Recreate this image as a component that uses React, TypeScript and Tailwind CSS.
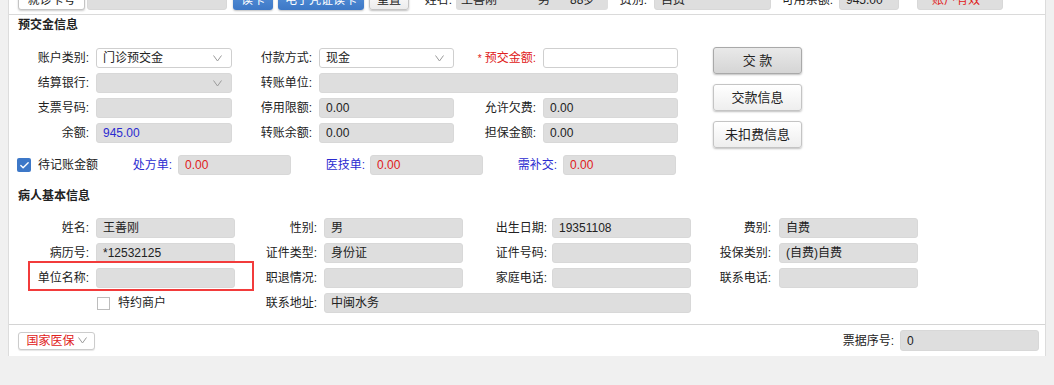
import type { ReactNode } from "react";
import { Check } from "lucide-react";

function Caret() {
  return (
    <svg width="9" height="7" viewBox="0 0 9 7" className="shrink-0">
      <polyline points="0.5,0.5 4.5,6 8.5,0.5" fill="none" stroke="#9a9a9a" strokeWidth="1" />
    </svg>
  );
}

type BoxProps = {
  className?: string;
  value?: string;
  white?: boolean;
  select?: boolean;
  valueClass?: string;
};

function Box({ className = "", value, white, select, valueClass = "text-[#222]" }: BoxProps) {
  return (
    <div
      className={`flex h-5 shrink-0 items-center rounded-[3px] border pl-[6px] pr-[9px] ${
        white ? "border-[#cfcfcf] bg-white" : "border-[#d8d8d8] bg-[#dedede]"
      } ${className}`}
    >
      <span className={`flex-1 truncate ${valueClass}`}>{value}</span>
      {select && <Caret />}
    </div>
  );
}

function Label({
  className = "",
  tone = "text-[#222]",
  children,
}: {
  className?: string;
  tone?: string;
  children: ReactNode;
}) {
  return (
    <div className={`shrink-0 whitespace-nowrap text-right ${tone} ${className}`}>{children}</div>
  );
}

function SideButton({ children, primary }: { children: ReactNode; primary?: boolean }) {
  return (
    <button
      className={`h-[27px] w-[89px] rounded-[3px] border text-[13px] text-[#222] shadow-[0_1px_2px_rgba(0,0,0,0.25)] ${
        primary
          ? "border-[#a9a9a9] bg-gradient-to-b from-[#e9e9e9] to-[#d5d5d5]"
          : "border-[#c4c4c4] bg-gradient-to-b from-white to-[#eeeeee]"
      }`}
    >
      {children}
    </button>
  );
}

function TopBar() {
  return (
    <div className="h-[15px] overflow-hidden border-b border-[#dadada]">
      <div className="-mt-[11px] flex h-[21px] items-center pl-[9px]">
        <button className="h-[21px] w-[67px] rounded-[3px] border border-[#c4c4c4] bg-white text-[#222] shadow-[0_1px_2px_rgba(0,0,0,0.2)]">
          就诊卡号
        </button>
        <Box className="ml-[2px] w-[140px]" />
        <button className="ml-[6px] h-[21px] w-[40px] rounded-[3px] bg-gradient-to-b from-[#5b95dc] to-[#3d78c6] text-white shadow-[0_1px_2px_rgba(0,0,0,0.25)]">
          读卡
        </button>
        <button className="ml-[5px] h-[21px] w-[86px] rounded-[3px] bg-gradient-to-b from-[#5b95dc] to-[#3d78c6] text-white shadow-[0_1px_2px_rgba(0,0,0,0.25)]">
          电子凭证读卡
        </button>
        <button className="ml-[5px] h-[21px] w-[40px] rounded-[3px] border border-[#c4c4c4] bg-gradient-to-b from-white to-[#ececec] text-[#222] shadow-[0_1px_2px_rgba(0,0,0,0.25)]">
          重置
        </button>
        <Label className="w-[47px] pr-[4px]">姓名:</Label>
        <div className="flex h-5 w-[152px] items-center rounded-[3px] bg-[#dedede] pl-[5px] text-[#222]">
          <span className="w-[77px]">王善刚</span>
          <span className="w-[32px]">男</span>
          <span>88岁</span>
        </div>
        <Label className="w-[46px] pr-[7px]">费别:</Label>
        <Box className="w-[117px]" value="自费" />
        <Label className="w-[68px] pr-[6px]">可用余额:</Label>
        <Box className="w-[60px]" value="945.00" />
        <Box className="ml-[18px] w-[86px] pl-[14px]" value="账户有效" valueClass="text-[#e02020]" />
      </div>
    </div>
  );
}

function Prepaid() {
  return (
    <div className="pl-[9px]">
      <div className="pt-[2px] font-bold leading-4 text-[#222]">预交金信息</div>
      <div className="mt-[15px] flex">
        <div className="flex flex-col gap-[5px]">
          <div className="flex items-center">
            <Label className="w-[78px] pr-[7px]">账户类别:</Label>
            <Box className="w-[136px]" white select value="门诊预交金" />
            <Label className="w-[87px] pr-[7px]">付款方式:</Label>
            <Box className="w-[135px]" white select value="现金" />
            <Label className="w-[89px] pr-[7px]" tone="text-[#e02020]">
              <span className="mr-[3px] text-[10px]">*</span>预交金额:
            </Label>
            <Box className="w-[135px]" white />
          </div>
          <div className="flex items-center">
            <Label className="w-[78px] pr-[7px]">结算银行:</Label>
            <Box className="w-[136px]" select />
            <Label className="w-[87px] pr-[7px]">转账单位:</Label>
            <Box className="w-[359px]" />
          </div>
          <div className="flex items-center">
            <Label className="w-[78px] pr-[7px]">支票号码:</Label>
            <Box className="w-[136px]" />
            <Label className="w-[87px] pr-[7px]">停用限额:</Label>
            <Box className="w-[135px]" value="0.00" />
            <Label className="w-[89px] pr-[7px]">允许欠费:</Label>
            <Box className="w-[135px]" value="0.00" />
          </div>
          <div className="flex items-center">
            <Label className="w-[78px] pr-[7px]">余额:</Label>
            <Box className="w-[136px]" value="945.00" valueClass="text-[#2b2bd0]" />
            <Label className="w-[87px] pr-[7px]">转账余额:</Label>
            <Box className="w-[135px]" value="0.00" />
            <Label className="w-[89px] pr-[7px]">担保金额:</Label>
            <Box className="w-[135px]" value="0.00" />
          </div>
        </div>
        <div className="-mt-[1px] ml-[35px] flex flex-col gap-[10px]">
          <SideButton primary>交 款</SideButton>
          <SideButton>交款信息</SideButton>
          <SideButton>未扣费信息</SideButton>
        </div>
      </div>
      <div className="mt-[7px] flex items-center">
        <div className="-ml-[1px] flex size-[14px] items-center justify-center rounded-[2px] bg-[#3d78c8]">
          <Check className="size-[11px] text-white" strokeWidth={3} />
        </div>
        <span className="ml-[7px] w-[62px] text-[#222]">待记账金额</span>
        <Label className="w-[78px] pr-[6px]" tone="text-[#2b2bd0]">处方单:</Label>
        <Box className="w-[113px]" value="0.00" valueClass="text-[#e02020]" />
        <Label className="w-[79px] pr-[5px]" tone="text-[#2b2bd0]">医技单:</Label>
        <Box className="w-[113px]" value="0.00" valueClass="text-[#e02020]" />
        <Label className="w-[80px] pr-[6px]" tone="text-[#2b2bd0]">需补交:</Label>
        <Box className="w-[113px]" value="0.00" valueClass="text-[#e02020]" />
      </div>
    </div>
  );
}

function Patient() {
  return (
    <div className="pl-[9px] pb-[11px]">
      <div className="mt-[13px] font-bold leading-4 text-[#222]">病人基本信息</div>
      <div className="mt-[14px] flex flex-col gap-[5px]">
        <div className="flex items-center">
          <Label className="w-[78px] pr-[7px]">姓名:</Label>
          <Box className="w-[139px]" value="王善刚" />
          <Label className="w-[89px] pr-[7px]">性别:</Label>
          <Box className="w-[139px]" value="男" />
          <Label className="w-[89px] pr-[5px]">出生日期:</Label>
          <Box className="w-[139px]" value="19351108" />
          <Label className="w-[88px] pr-[8px]">费别:</Label>
          <Box className="w-[139px]" value="自费" />
        </div>
        <div className="flex items-center">
          <Label className="w-[78px] pr-[7px]">病历号:</Label>
          <Box className="w-[139px]" value="*12532125" />
          <Label className="w-[89px] pr-[7px]">证件类型:</Label>
          <Box className="w-[139px]" value="身份证" />
          <Label className="w-[89px] pr-[5px]">证件号码:</Label>
          <Box className="w-[139px]" />
          <Label className="w-[88px] pr-[8px]">投保类别:</Label>
          <Box className="w-[139px]" value="(自费)自费" />
        </div>
        <div className="flex items-center">
          <Label className="w-[78px] pr-[7px]">单位名称:</Label>
          <Box className="w-[139px]" />
          <Label className="w-[89px] pr-[7px]">职退情况:</Label>
          <Box className="w-[139px]" />
          <Label className="w-[89px] pr-[5px]">家庭电话:</Label>
          <Box className="w-[139px]" />
          <Label className="w-[88px] pr-[8px]">联系电话:</Label>
          <Box className="w-[139px]" />
        </div>
        <div className="flex items-center">
          <div className="flex w-[217px] items-center pl-[79px]">
            <div className="size-[13px] border border-[#bdbdbd] bg-white" />
            <span className="ml-[8px] text-[#222]">特约商户</span>
          </div>
          <Label className="w-[89px] pr-[7px]">联系地址:</Label>
          <Box className="w-[367px]" value="中闽水务" />
        </div>
      </div>
    </div>
  );
}

export default function App() {
  return (
    <div className="relative h-[385px] w-[1054px] overflow-hidden bg-[#f0f0f0] font-['Liberation_Sans','Noto_Sans_CJK_SC',sans-serif] text-[12px]">
      <div className="mx-[8px] border-x border-[#dcdcdc] bg-white">
        <TopBar />
        <Prepaid />
        <Patient />
        <div className="flex h-[32px] items-center justify-between border-t border-[#d4d4d4] pl-[9px] pr-[6px]">
          <button className="flex h-[18px] w-[77px] items-center justify-center gap-[3px] rounded-[3px] border border-[#cccccc] bg-white shadow-[0_1px_1px_rgba(0,0,0,0.1)]">
            <span className="text-[#e02020]">国家医保</span>
            <Caret />
          </button>
          <div className="flex items-center">
            <span className="mr-[6px] text-[#222]">票据序号:</span>
            <Box className="h-[21px] w-[139px]" value="0" />
          </div>
        </div>
      </div>
      <div className="absolute left-[28px] top-[261px] h-[30px] w-[226px] border-2 border-[#f23b3b]" />
    </div>
  );
}
